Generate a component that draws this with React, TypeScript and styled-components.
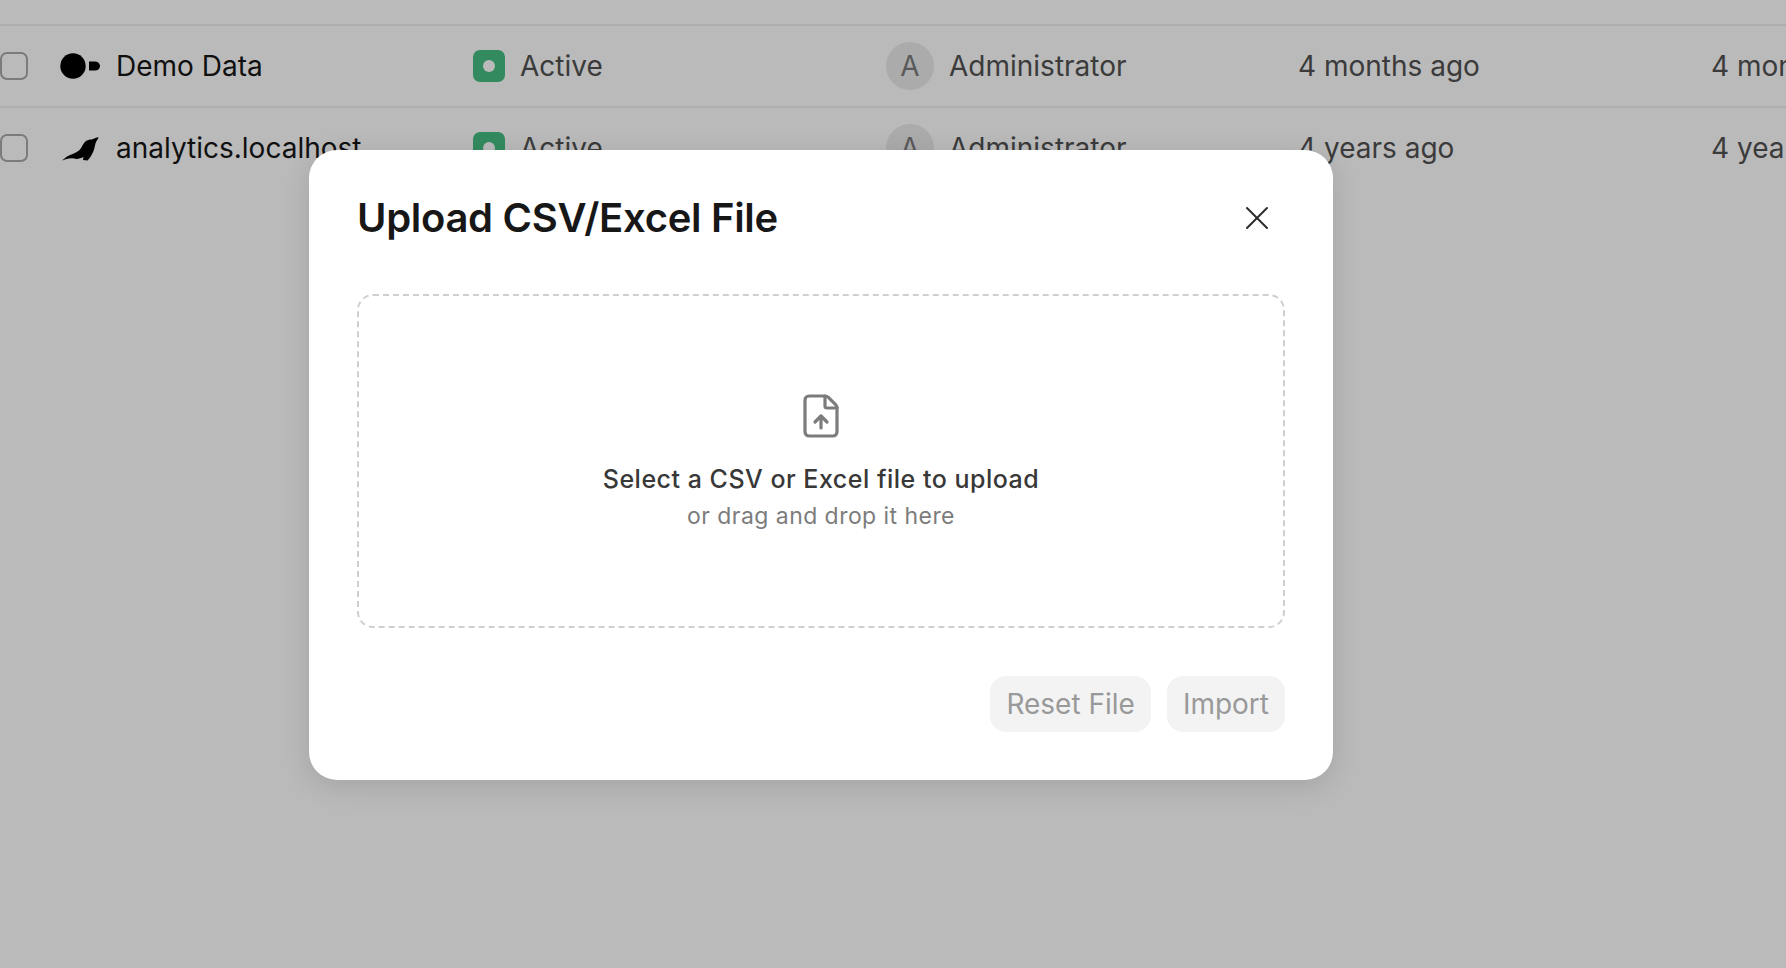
import styled, { createGlobalStyle } from "styled-components";
import { FileUp, X } from "lucide-react";

const GlobalStyle = createGlobalStyle`
  html, body {
    margin: 0;
    height: 100%;
    background: #fff;
    font-family: Inter, "Noto Sans", sans-serif;
    overflow: hidden;
  }
`;

const Page = styled.div`
  position: relative;
  width: 100%;
  height: 100vh;
  overflow: hidden;
`;

const Table = styled.div`
  margin-top: -56px;
`;

const Row = styled.div`
  display: grid;
  grid-template-columns: 473px 413px 412px 413px 413px;
  align-items: center;
  height: 82px;
  box-sizing: border-box;
  white-space: nowrap;
  overflow: hidden;
  border-bottom: 2px solid #f0f0f0;

  &:last-child {
    border-bottom-color: transparent;
  }
`;

const NameCell = styled.div`
  display: flex;
  align-items: center;
`;

const Checkbox = styled.span`
  width: 28px;
  height: 28px;
  box-sizing: border-box;
  border: 2px solid #a9a9a9;
  border-radius: 7px;
  background: #fff;
  flex: none;
`;

const SourceIcon = styled.svg`
  width: 42px;
  height: 28px;
  margin: 0 14px 0 32px;
  flex: none;
`;

const Name = styled.span`
  font-size: 28px;
  color: #171717;
`;

const StatusCell = styled.div`
  display: flex;
  align-items: center;
  gap: 15px;
`;

const StatusDot = styled.span`
  width: 32px;
  height: 32px;
  border-radius: 7px;
  background: #46be82;
  display: flex;
  align-items: center;
  justify-content: center;

  &::after {
    content: "";
    width: 12px;
    height: 12px;
    border-radius: 50%;
    background: #fff;
  }
`;

const Muted = styled.span`
  font-size: 28px;
  color: #525252;
`;

const OwnerCell = styled.div`
  display: flex;
  align-items: center;
  gap: 15px;
`;

const Avatar = styled.span`
  width: 48px;
  height: 48px;
  border-radius: 50%;
  background: #ebebeb;
  color: #7c7c7c;
  font-size: 28px;
  display: flex;
  align-items: center;
  justify-content: center;
`;

const Overlay = styled.div`
  position: absolute;
  inset: 0;
  background: rgba(0, 0, 0, 0.27);
`;

const Dialog = styled.div`
  position: absolute;
  left: 309px;
  top: 150px;
  width: 1024px;
  height: 630px;
  box-sizing: border-box;
  padding: 48px;
  background: #fff;
  border-radius: 28px;
  box-shadow: 0 6px 28px rgba(0, 0, 0, 0.12);
  display: flex;
  flex-direction: column;
`;

const DialogHeader = styled.div`
  display: flex;
  align-items: center;
  justify-content: space-between;
  height: 40px;
  margin-bottom: 56px;
`;

const Title = styled.h2`
  margin: 0 0 2px;
  font-size: 40px;
  font-weight: 600;
  letter-spacing: -0.3px;
  color: #171717;
`;

const CloseButton = styled.button`
  width: 40px;
  height: 40px;
  margin-right: 8px;
  padding: 0;
  border: none;
  background: none;
  color: #2b2b2b;
  display: flex;
  align-items: center;
  justify-content: center;
`;

const DropZone = styled.div`
  height: 334px;
  box-sizing: border-box;
  padding-top: 4px;
  border: 2px dashed #cfcfcf;
  border-radius: 16px;
  display: flex;
  flex-direction: column;
  align-items: center;
  justify-content: center;
  color: #7c7c7c;
`;

const DropTitle = styled.div`
  margin-top: 21px;
  font-size: 25px;
  font-weight: 500;
  letter-spacing: 0.5px;
  line-height: 36px;
  color: #383838;
`;

const DropHint = styled.div`
  margin-top: 1px;
  font-size: 23px;
  letter-spacing: 0.45px;
  line-height: 37px;
  color: #7c7c7c;
`;

const Actions = styled.div`
  display: flex;
  justify-content: flex-end;
  gap: 16px;
  margin-top: 48px;
`;

const ActionButton = styled.button`
  height: 56px;
  padding: 0 16px;
  border: none;
  border-radius: 16px;
  background: #f3f3f3;
  color: #999;
  font-family: inherit;
  font-size: 28px;
`;

const rows = [
  { name: "Demo Data", updated: "4 months ago", created: "4 months ago", icon: "demo" },
  { name: "analytics.localhost", updated: "4 years ago", created: "4 years ago", icon: "seal" },
];

function App() {
  return (
    <Page>
      <GlobalStyle />
      <Table>
        <Row />
        {rows.map((row) => (
          <Row key={row.name}>
            <NameCell>
              <Checkbox />
              <SourceIcon viewBox="0 0 42 28">
                {row.icon === "demo" ? (
                  <>
                    <circle cx="13" cy="14" r="12.7" fill="#000" />
                    <path d="M29 9.5h6a5 4.5 0 0 1 0 9h-6z" fill="#000" />
                  </>
                ) : (
                  <path
                    d="M2 26.500L7 22.500C10 20.500 15 19.500 19 16.500C22 14 23 9 26 7C29 5 32 6 34 4.500L38.500 3C38 5 37 6.500 36 8C35 10 35 13 33.500 17C32 20.500 30 24 27.500 26.500L23 26L23.500 23C20.500 24.500 17 25.500 14 24.500C11 23.800 9 24.500 6.500 25Z"
                    fill="#000"
                  />
                )}
              </SourceIcon>
              <Name>{row.name}</Name>
            </NameCell>
            <StatusCell>
              <StatusDot />
              <Muted>Active</Muted>
            </StatusCell>
            <OwnerCell>
              <Avatar>A</Avatar>
              <Muted>Administrator</Muted>
            </OwnerCell>
            <Muted>{row.updated}</Muted>
            <Muted>{row.created}</Muted>
          </Row>
        ))}
      </Table>
      <Overlay />
      <Dialog>
        <DialogHeader>
          <Title>Upload CSV/Excel File</Title>
          <CloseButton>
            <X size={40} strokeWidth={1.2} />
          </CloseButton>
        </DialogHeader>
        <DropZone>
          <FileUp size={48} strokeWidth={1.6} />
          <DropTitle>Select a CSV or Excel file to upload</DropTitle>
          <DropHint>or drag and drop it here</DropHint>
        </DropZone>
        <Actions>
          <ActionButton>Reset File</ActionButton>
          <ActionButton>Import</ActionButton>
        </Actions>
      </Dialog>
    </Page>
  );
}

export default App;
